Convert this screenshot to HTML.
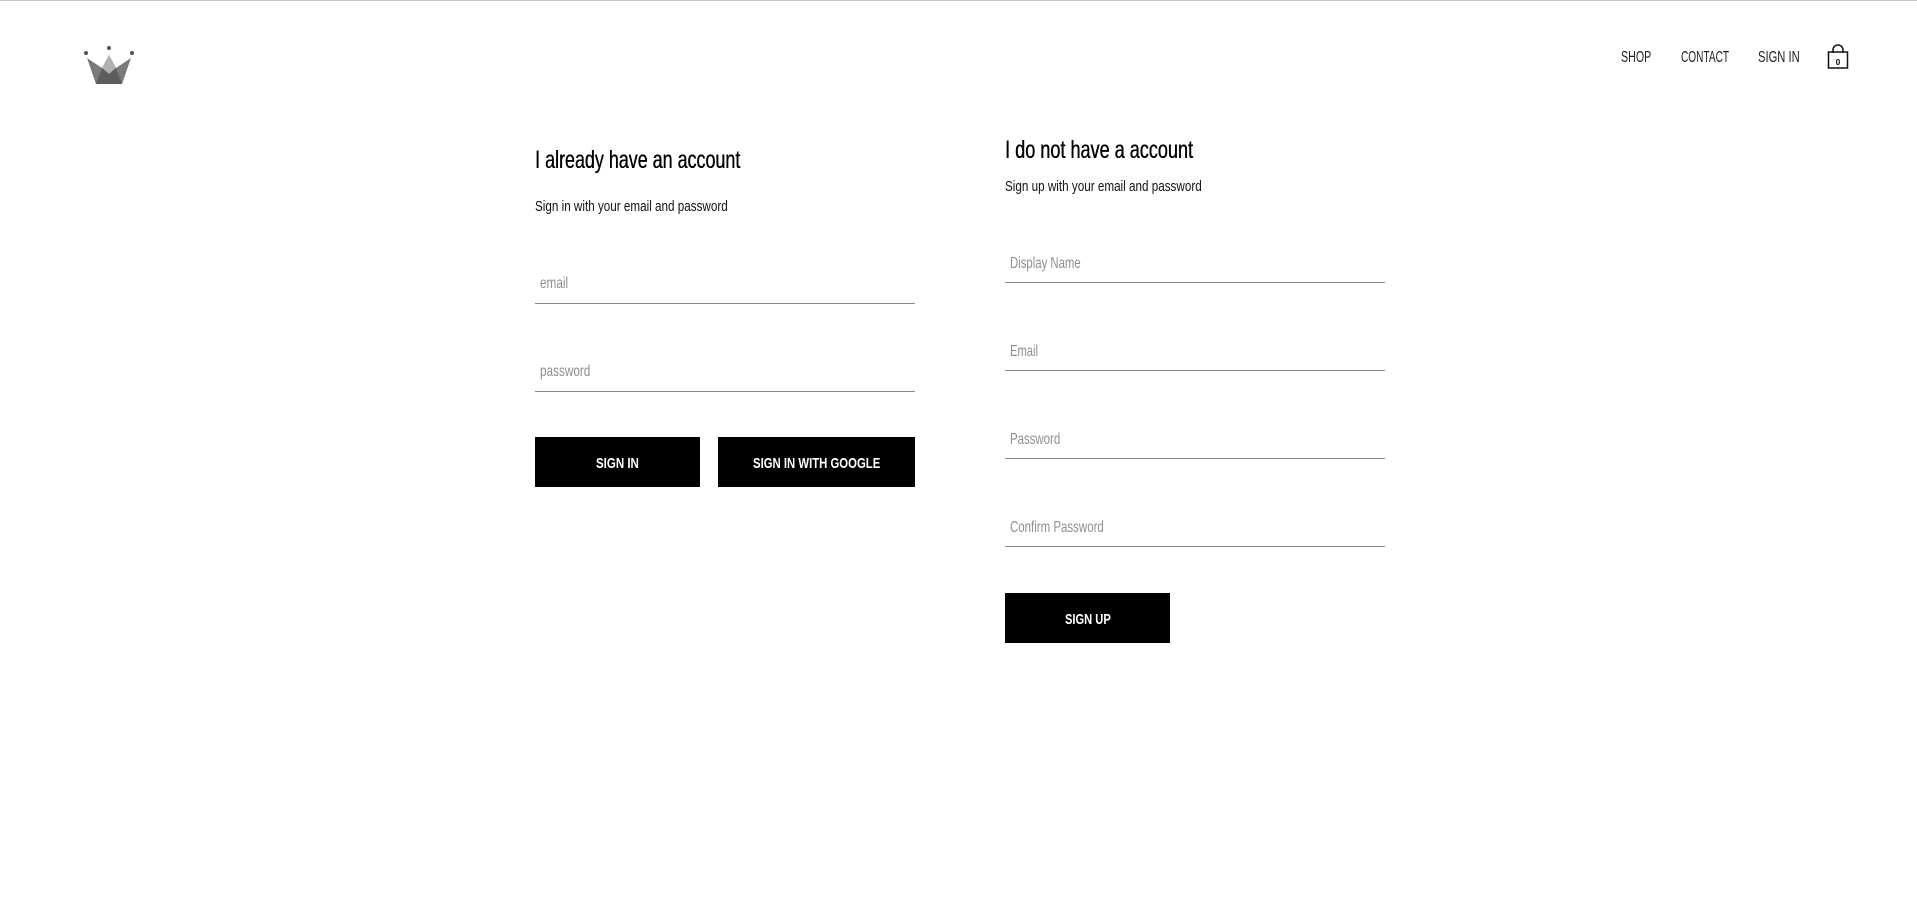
<!DOCTYPE html>
<html><head><meta charset="utf-8"><style>
html,body{margin:0;padding:0;background:#fff;width:1917px;height:923px;overflow:hidden;position:relative;font-family:"Liberation Sans Narrow","Liberation Sans",sans-serif;}
.t{position:absolute;white-space:nowrap;line-height:1;transform-origin:0 50%;display:inline-block;margin-top:1px;}
.line{position:absolute;height:1px;background:#8a8a8a;}
.btn{position:absolute;background:#000;}
.ph{color:#8f8f8f;font-size:16px;}
.bt{color:#fff;font-weight:bold;font-size:15px;}
.h{text-shadow:0.4px 0 0 #000;}
</style></head><body>
<div style="position:absolute;left:0;top:0;width:1917px;height:1px;background:#c8c8c8"></div>
<svg style="position:absolute;left:82px;top:44px" width="54" height="44" viewBox="0 0 54 44">
<circle cx="4" cy="9" r="2" fill="#555"/><circle cx="27" cy="4" r="2" fill="#555"/><circle cx="50" cy="9" r="2" fill="#555"/>
<polygon points="5,14 14,40 40,40 49,14 34,24 27,11 20,24" fill="#7a7a7a"/>
<polygon points="27,11 20,24 27,30 34,24" fill="#b0b0b0"/>
<polygon points="20,24 27,30 34,24 40,40 14,40" fill="#5c5c5c"/>
</svg>
<span class="t" style="left:1621px;top:49px;font-size:16px;color:#222" data-w="30">SHOP</span>
<span class="t" style="left:1681px;top:49px;font-size:16px;color:#222" data-w="48">CONTACT</span>
<span class="t" style="left:1758px;top:49px;font-size:16px;color:#222" data-w="42">SIGN IN</span>
<svg style="position:absolute;left:1827px;top:44px" width="22" height="26" viewBox="0 0 22 26">
<path d="M6 9 V6 a5 5 0 0 1 10 0 V9" fill="none" stroke="#111" stroke-width="1.5"/>
<rect x="1.5" y="8" width="19" height="16" fill="none" stroke="#111" stroke-width="1.5"/>
<text x="11" y="21" font-size="8" font-weight="bold" text-anchor="middle" font-family="Liberation Sans">0</text>
</svg>

<span class="t h" style="left:535px;top:147px;font-size:25px;color:#000" data-w="205">I already have an account</span>
<span class="t" style="left:535px;top:198px;font-size:15px;color:#111" data-w="193">Sign in with your email and password</span>
<span class="t ph" style="left:540px;top:275px" data-w="28">email</span>
<div class="line" style="left:535px;top:303px;width:380px"></div>
<span class="t ph" style="left:540px;top:363px" data-w="50">password</span>
<div class="line" style="left:535px;top:391px;width:380px"></div>
<div class="btn" style="left:535px;top:437px;width:165px;height:50px"></div>
<span class="t bt" style="left:596px;top:455px" data-w="43">SIGN IN</span>
<div class="btn" style="left:718px;top:437px;width:197px;height:50px"></div>
<span class="t bt" style="left:753px;top:455px" data-w="127">SIGN IN WITH GOOGLE</span>

<span class="t h" style="left:1005px;top:137px;font-size:25px;color:#000" data-w="188">I do not have a account</span>
<span class="t" style="left:1005px;top:178px;font-size:15px;color:#111" data-w="197">Sign up with your email and password</span>
<span class="t ph" style="left:1010px;top:255px" data-w="71">Display Name</span>
<div class="line" style="left:1005px;top:282px;width:380px"></div>
<span class="t ph" style="left:1010px;top:343px" data-w="28">Email</span>
<div class="line" style="left:1005px;top:370px;width:380px"></div>
<span class="t ph" style="left:1010px;top:431px" data-w="50">Password</span>
<div class="line" style="left:1005px;top:458px;width:380px"></div>
<span class="t ph" style="left:1010px;top:519px" data-w="94">Confirm Password</span>
<div class="line" style="left:1005px;top:546px;width:380px"></div>
<div class="btn" style="left:1005px;top:593px;width:165px;height:50px"></div>
<span class="t bt" style="left:1065px;top:611px" data-w="46">SIGN UP</span>
<script>
document.querySelectorAll('.t').forEach(function(e){var w=parseFloat(e.getAttribute('data-w'));var ow=e.offsetWidth;if(w&&ow)e.style.transform='scaleX('+(w/ow)+')';});
</script>
</body></html>
